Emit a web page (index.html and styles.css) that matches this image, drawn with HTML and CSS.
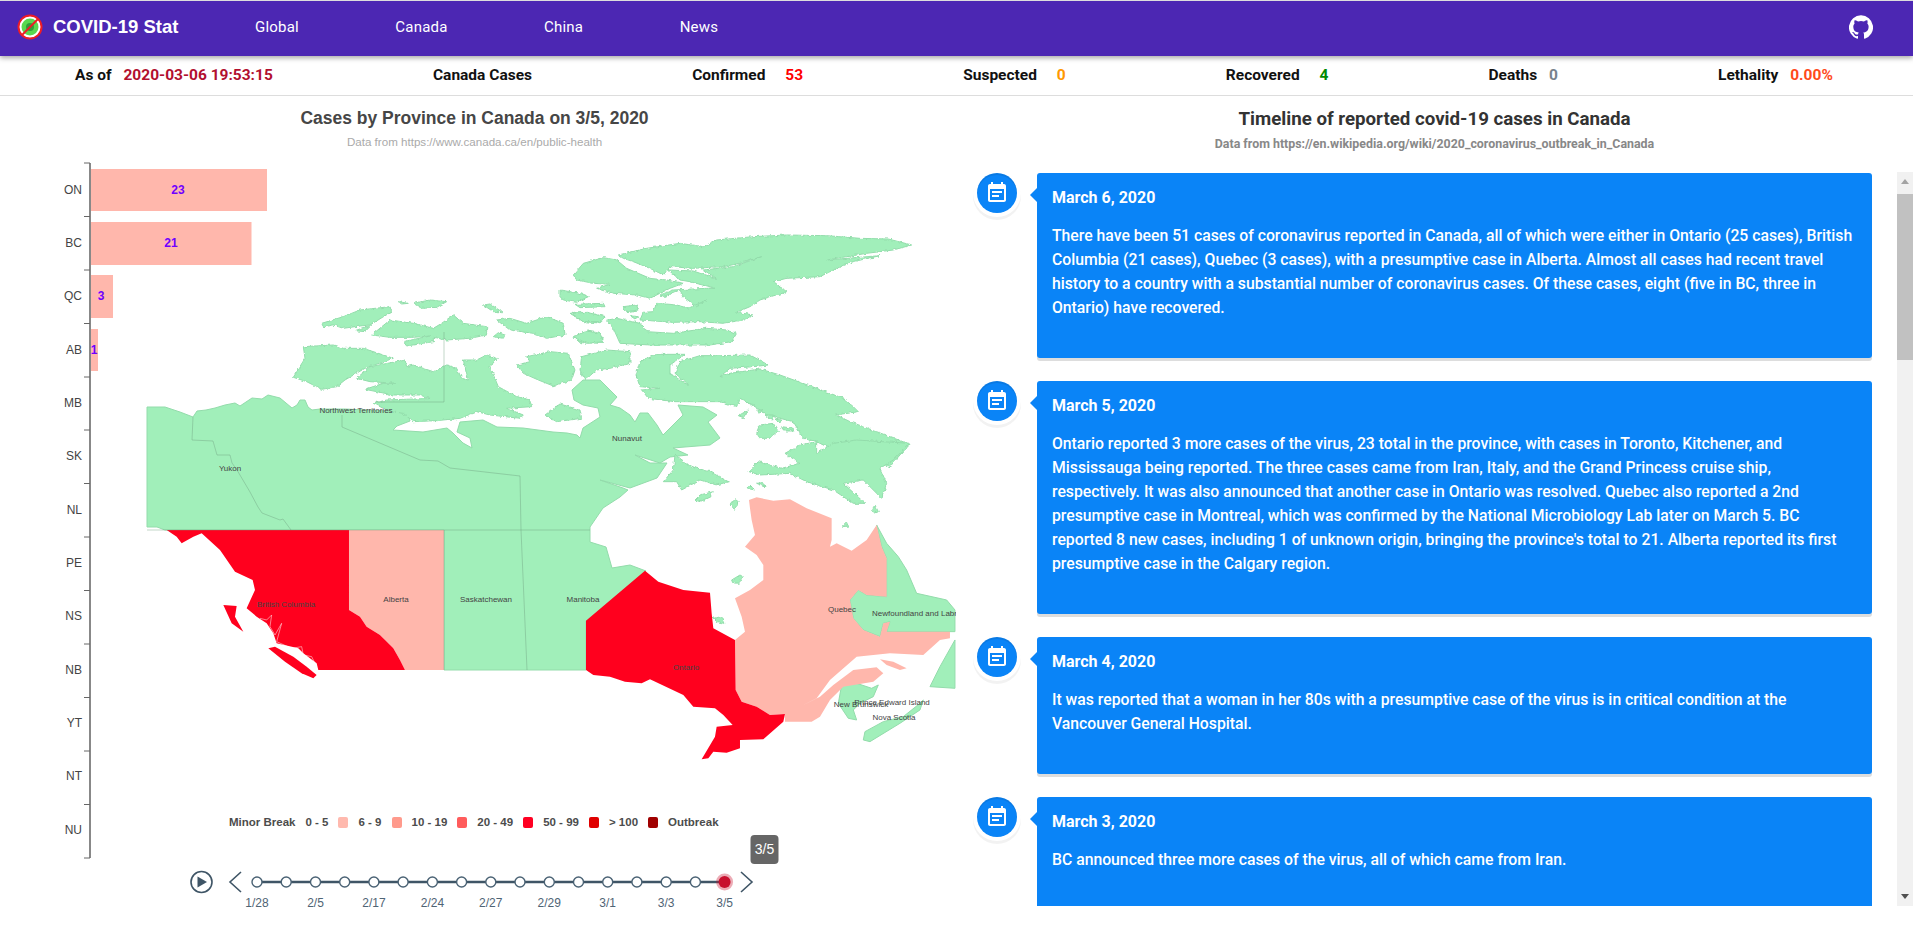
FILE: index.html
```html
<!DOCTYPE html>
<html lang="en">
<head>
    <meta charset="UTF-8">
    <meta name="viewport" content="width=device-width, initial-scale=1.0">
    <title>COVID-19 Stat</title>
    <link rel="stylesheet" href="styles.css">
</head>
<body>

<!-- Top navigation -->
<header class="navbar">
    <a class="brand" href="#">
        <svg class="brand-logo" viewBox="0 0 26 26">
            <circle class="logo-bg" cx="13" cy="13" r="11"/>
            <circle class="logo-virus" cx="13" cy="13" r="8.500"/>
            <circle class="logo-core" cx="13" cy="13" r="4"/>
            <circle class="logo-ring" cx="13" cy="13" r="11.500"/>
            <path class="logo-ring" d="M21 5 L5 21"/>
        </svg>
        COVID-19 Stat
    </a>
    <nav class="nav-links">
        <a href="#">Global</a>
        <a href="#">Canada</a>
        <a href="#">China</a>
        <a href="#">News</a>
    </nav>
    <svg class="github" viewBox="0 0 24 24"><path d="M12 .3a12 12 0 0 0-3.8 23.4c.6.1.8-.3.8-.6v-2c-3.3.7-4-1.6-4-1.6-.6-1.4-1.4-1.8-1.4-1.8-1-.7.1-.7.1-.7 1.2 0 1.9 1.2 1.9 1.2 1 1.8 2.8 1.3 3.5 1 0-.8.4-1.3.7-1.6-2.7-.3-5.5-1.3-5.5-6 0-1.2.5-2.3 1.3-3.1-.2-.4-.6-1.6 0-3.2 0 0 1-.3 3.4 1.2a11.5 11.5 0 0 1 6 0c2.3-1.5 3.3-1.2 3.3-1.2.6 1.6.2 2.8 0 3.2.9.8 1.3 1.9 1.3 3.2 0 4.6-2.8 5.6-5.5 5.9.5.4.9 1 .9 2.2v3.3c0 .3.1.7.8.6A12 12 0 0 0 12 .3"/></svg>
</header>

<!-- Summary numbers -->
<section class="stats">
    <div class="stat stat-first gap-s">As of <span class="v-date">2020-03-06 19:53:15</span></div>
    <div class="stat">Canada Cases</div>
    <div class="stat gap-l">Confirmed <span class="v-confirmed">53</span></div>
    <div class="stat gap-l">Suspected <span class="v-suspected">0</span></div>
    <div class="stat gap-l">Recovered <span class="v-recovered">4</span></div>
    <div class="stat gap-s">Deaths <span class="v-deaths">0</span></div>
    <div class="stat gap-s">Lethality <span class="v-lethality">0.00%</span></div>
</section>

<main class="content">

    <!-- Map and bar chart -->
    <section class="chart-panel">
        <div class="chart-head">
            <h2>Cases by Province in Canada on 3/5, 2020</h2>
            <p>Data from https://www.canada.ca/en/public-health</p>
        </div>

        <svg class="chart" viewBox="0 155 956 705">
            <defs>
                <!-- roughens the island coastlines -->
                <filter id="coast" x="-5%" y="-5%" width="110%" height="110%">
                    <feTurbulence type="fractalNoise" baseFrequency="0.09" numOctaves="2" seed="4" result="noise"/>
                    <feDisplacementMap in="SourceGraphic" in2="noise" scale="11" xChannelSelector="R" yChannelSelector="G"/>
                </filter>
            </defs>

            <!-- mainland, page coordinates -->
            <polygon class="green" points="147,407 165,407 168,408 180,412 193,417 197,411 206,410 215,408 225,405 235,403 240,406 252,398 262,399 268,395 280,398 292,408 297,405 300,400 305,400 308,407 312,410 320,409 345,409 390,411 408,413 410,421 397,426 393,430 423,432 447,428 453,433 460,440 463,443 472,448 470,438 457,432 460,422 483,420 497,427 523,428 553,432 567,433 577,435 580,438 583,428 600,417 598,408 583,405 574,400 572,390 583,380 600,380 617,397 610,405 620,408 630,415 635,422 640,413 648,413 657,425 663,435 670,428 683,415 678,405 703,407 717,415 708,422 720,438 710,445 685,447 673,448 688,455 670,457 660,463 635,455 650,463 667,463 657,478 630,488 600,480 623,488 628,490 620,497 603,508 590,527 590,530 590,542 606,547 612,568 630,565 646,571 586,621 586,670 444,670 444,530 165,530 157,527 147,527"/>

            <!-- west arctic islands -->
            <g class="rough" transform="translate(290,300) scale(.3333)">
                <polygon class="green" points="40,140 130,135 160,145 220,145 310,175 225,205 165,240 140,260 95,268 50,245 10,232 45,175"/>
                <polygon class="green" points="200,235 240,200 345,180 350,200 370,195 430,215 470,195 500,205 515,235 535,240 520,180 560,180 590,165 622,175 600,200 625,260 680,290 720,300 725,320 650,325 700,345 690,355 600,345 560,335 510,355 440,362 370,365 340,340 300,335 250,310 290,300 400,296 420,296 390,285 310,285 225,268 280,250 320,250 240,245"/>
                <polygon class="green" points="95,70 160,50 210,30 300,20 305,35 240,75 195,80 160,85 130,75 100,80"/>
                <polygon class="green" points="195,92 245,75 225,95"/>
                <polygon class="green" points="245,105 300,60 370,70 430,85 455,70 490,45 520,70 590,80 590,105 540,115 470,120 430,112 430,125 350,138 340,125 420,108 370,112 300,112"/>
                <polygon class="green" points="610,110 625,98 645,105 640,115"/>
                <polygon class="green" points="325,5 355,10 335,12"/>
                <polygon class="green" points="370,10 420,0 470,5 440,22 395,25"/>
                <polygon class="green" points="620,60 660,55 710,70 770,50 820,70 825,105 770,115 730,100 660,90"/>
                <polygon class="green" points="580,15 600,12 635,35 610,35"/>
                <polygon class="green" points="850,110 900,92 940,115 935,130 870,128"/>
                <polygon class="green" points="845,40 900,40 945,50 920,68 880,65"/>
                <polygon class="green" points="680,195 720,185 710,170 780,155 835,160 855,210 845,240 790,258 745,240 700,220"/>
                <polygon class="green" points="875,170 950,150 1020,155 1020,190 960,205 920,210 885,240 870,210"/>
                <polygon class="green" points="765,345 810,312 870,330 875,355 800,365"/>
            </g>

            <!-- north and baffin -->
            <g class="rough" transform="translate(560,225) scale(.3333)">
                <polygon class="green" points="40,150 70,115 130,98 170,105 200,130 270,160 320,165 370,175 330,190 270,220 230,210 160,205 110,190 150,178 100,175 50,165"/>
                <polygon class="green" points="175,90 260,70 360,55 430,65 470,45 580,35 680,30 800,32 900,40 985,42 1055,60 1000,75 920,85 800,105 960,92 880,110 830,130 780,155 680,160 640,170 680,200 600,225 570,245 530,262 580,270 550,285 490,295 420,290 340,292 240,285 250,262 280,260 290,235 350,240 385,250 440,225 410,245 370,215 360,195 310,215 300,210 340,195 440,190 465,190 390,170 360,165 325,135 400,138 450,155 470,160 430,135 520,125 605,95 540,115 490,125 400,130 330,125 310,150 270,130 220,110 190,100"/>
                <polygon class="green" points="160,310 140,285 170,280 240,295 260,320 340,325 440,310 500,315 530,325 515,350 450,360 350,360 270,360 180,355"/>
                <polygon class="green" points="0,195 60,205 85,215 50,232 10,225 0,215"/>
                <polygon class="green" points="45,238 130,235 135,245 60,248"/>
                <polygon class="green" points="30,265 80,262 135,275 125,290 70,290"/>
                <polygon class="green" points="40,335 80,318 120,325 130,350 80,355"/>
                <polygon class="green" points="190,245 230,240 235,255 200,260"/>
                <polygon class="green" points="210,272 235,275 225,282"/>
                <polygon class="green" points="228,450 240,410 290,388 375,388 330,420 330,445 375,475 385,478 345,445 360,410 420,392 480,392 570,390 625,420 580,425 510,430 480,455 510,445 600,432 660,450 770,490 850,520 880,545 895,560 830,570 870,590 950,620 1050,658 1020,690 990,725 950,710 900,680 860,675 830,680 770,650 730,640 700,590 660,580 620,570 590,548 540,520 530,545 480,530 420,530 345,530 265,520 245,495 300,490 240,485"/>
                <polygon class="green" points="590,625 600,600 640,595 655,620 630,640 600,640"/>
                <polygon class="green" points="665,605 700,610 700,618 670,618"/>
                <polygon class="green" points="615,570 640,570 635,585"/>
                <polygon class="green" points="535,572 565,555 550,578"/>
                <polygon class="green" points="590,555 605,555 600,565"/>
                <polygon class="green" points="645,582 665,585 660,597"/>
            </g>

            <!-- hudson bay islands and south baffin -->
            <g class="rough" transform="translate(600,440) scale(.3333)">
                <polygon class="green" points="447,95 475,65 545,85 600,70 555,40 600,15 650,5 650,40 700,10 770,0 930,10 880,60 840,85 860,130 845,175 790,120 730,130 795,190 760,190 700,150 620,125 570,100 480,105"/>
                <polygon class="green" points="190,125 220,90 225,45 255,70 290,85 330,95 385,125 350,135 300,120 245,150 230,125"/>
                <polygon class="green" points="285,180 300,165 340,155 330,170 300,185"/>
                <polygon class="green" points="390,195 405,178 415,185 405,208"/>
                <polygon class="green" points="440,145 450,135 465,150"/>
                <polygon class="green" points="470,130 490,128 495,140"/>
                <polygon class="green" points="815,210 825,195 835,215 825,220"/>
                <polygon class="green" points="728,260 740,248 745,258"/>
                <polygon class="green" points="340,535 365,530 375,550 350,545"/>
                <polygon class="green" points="395,420 420,405 432,412 415,430 398,428"/>
            </g>

            <!-- east provinces -->
            <g transform="translate(600,440) scale(.3333)">
                <polygon class="green" points="830,255 845,320 860,355 860,470 800,465 775,450 750,480 760,535 790,570 840,590 850,550 870,545 860,575 1065,575 1065,510 1040,480 950,460 920,390 895,350 860,310"/>
                <polygon class="green" points="990,740 1020,680 1065,600 1065,745"/>
                <polygon class="green" points="725,735 770,730 815,745 835,735 820,770 780,790 760,810 770,840 745,835 715,790"/>
                <polygon class="green" points="790,900 795,875 850,845 910,830 960,790 970,780 960,810 900,850 810,905"/>
                <polygon class="pink" points="447,180 470,172 520,182 570,178 620,205 695,235 695,300 690,320 710,310 755,332 800,300 830,255 845,320 860,355 860,470 800,465 775,450 750,480 760,535 790,570 840,590 850,550 870,545 860,575 1050,575 1050,595 1020,600 970,645 870,640 770,650 690,720 650,775 600,800 660,770 700,735 760,690 830,682 850,700 820,725 730,740 690,780 660,830 635,845 555,845 555,822 510,825 470,800 425,785 407,750 405,600 435,575 425,530 405,475 450,450 490,420 490,375 470,345 435,320 465,285 455,240 450,205"/>
                <polygon class="pink" points="840,658 880,665 920,685 900,690 860,675"/>
                <polygon class="red" points="-42,542 135,392 175,425 250,450 330,458 335,520 340,565 405,600 407,750 425,785 470,800 510,825 555,822 550,845 490,898 420,900 420,925 380,938 340,935 325,955 305,958 345,890 350,860 398,855 370,825 345,805 280,800 250,765 150,718 125,730 75,725 30,710 -20,705 -42,690"/>
            </g>

            <!-- west provinces -->
            <g transform="translate(160,520) scale(.3333)">
                <polygon class="pink" points="567,30 852,30 852,450 735,450 720,420 700,385 660,345 620,320 600,290 567,270"/>
                <polygon class="red" points="20,30 567,30 567,270 600,290 620,320 660,345 700,385 720,420 735,450 475,450 470,430 430,400 415,385 350,370 340,340 320,310 290,290 260,265 285,210 278,180 225,155 180,90 125,40 100,50 65,70 50,50"/>
                <polygon class="red" points="325,385 345,380 400,410 440,440 470,465 460,475 425,460 375,425"/>
                <polygon class="red" points="190,255 230,258 225,290 250,335 215,310"/>
                <path class="fjord" d="M300 295 320 300 335 285 330 320 345 345 365 310 350 365 395 385 425 380 430 405 455 410 470 440"/>
            </g>

            <!-- province borders -->
            <path class="border" d="M193 417 192 440 213 441 217 455 230 455 232 463 237 470 250 492 258 507 262 513 280 520 283 519 291 530"/>
            <path class="border" d="M342 415 342 427 420 460 438 461 450 468 520 476 521 530 527 670"/>
            <path class="border" d="M147 530 590 530 M444 530 444 670"/>
            <path class="border" d="M444 332 444 402 375 402"/>

            <!-- province names -->
            <text class="region" x="356" y="413">Northwest Territories</text>
            <text class="region" x="230" y="471">Yukon</text>
            <text class="region" x="627" y="441">Nunavut</text>
            <text class="region" x="286" y="607">British Columbia</text>
            <text class="region" x="396" y="602">Alberta</text>
            <text class="region" x="486" y="602">Saskatchewan</text>
            <text class="region" x="583" y="602">Manitoba</text>
            <text class="region" x="686" y="670">Ontario</text>
            <text class="region" x="842" y="612">Quebec</text>
            <text class="region" x="861" y="707">New Brunswick</text>
            <text class="region" x="892" y="705">Prince Edward Island</text>
            <text class="region" x="894" y="720">Nova Scotia</text>
            <text class="region region-start" x="872" y="616">Newfoundland and Labrador</text>

            <!-- bars -->
            <rect class="bar" x="90" y="169" width="177" height="42"/>
            <rect class="bar" x="90" y="222" width="161.5" height="43"/>
            <rect class="bar" x="90" y="275" width="23" height="43"/>
            <rect class="bar" x="90" y="329" width="8" height="42"/>
            <text class="bar-value" x="178" y="194">23</text>
            <text class="bar-value" x="171" y="247">21</text>
            <text class="bar-value" x="101" y="300">3</text>
            <text class="bar-value" x="94" y="354">1</text>

            <!-- y axis -->
            <path class="axis" d="M90 163 90 858"/>
            <path class="tick" d="M84 163H90 M84 216.5H90 M84 270H90 M84 323.500H90 M84 377H90 M84 430H90 M84 483.500H90 M84 537H90 M84 590.500H90 M84 644H90 M84 697.500H90 M84 751H90 M84 804.500H90 M84 858H90"/>
            <text class="y-label" x="82" y="194">ON</text>
            <text class="y-label" x="82" y="247">BC</text>
            <text class="y-label" x="82" y="300">QC</text>
            <text class="y-label" x="82" y="354">AB</text>
            <text class="y-label" x="82" y="407">MB</text>
            <text class="y-label" x="82" y="460">SK</text>
            <text class="y-label" x="82" y="514">NL</text>
            <text class="y-label" x="82" y="567">PE</text>
            <text class="y-label" x="82" y="620">NS</text>
            <text class="y-label" x="82" y="674">NB</text>
            <text class="y-label" x="82" y="727">YT</text>
            <text class="y-label" x="82" y="780">NT</text>
            <text class="y-label" x="82" y="834">NU</text>
        </svg>

        <div class="legend">
            <span class="legend-title">Minor Break</span>
            <span>0 - 5</span><i class="swatch s1"></i>
            <span>6 - 9</span><i class="swatch s2"></i>
            <span>10 - 19</span><i class="swatch s3"></i>
            <span>20 - 49</span><i class="swatch s4"></i>
            <span>50 - 99</span><i class="swatch s5"></i>
            <span>&gt; 100</span><i class="swatch s6"></i>
            <span>Outbreak</span>
        </div>

        <!-- date player -->
        <svg class="player" viewBox="0 831 956 94">
            <circle class="ctl" cx="201.500" cy="882" r="10.500"/>
            <path class="ctl-fill" d="M197.500 876.500 207 882 197.500 887.500z"/>
            <path class="ctl" d="M241 872 230 882 241 892"/>
            <path class="ctl" d="M741 872 752 882 741 892"/>
            <path class="track" d="M257 882H725"/>
            <g class="nodes">
                <circle cx="257" cy="882" r="5"/><circle cx="286.200" cy="882" r="5"/><circle cx="315.500" cy="882" r="5"/><circle cx="344.700" cy="882" r="5"/><circle cx="373.900" cy="882" r="5"/><circle cx="403.100" cy="882" r="5"/><circle cx="432.400" cy="882" r="5"/><circle cx="461.600" cy="882" r="5"/><circle cx="490.800" cy="882" r="5"/><circle cx="520" cy="882" r="5"/><circle cx="549.300" cy="882" r="5"/><circle cx="578.500" cy="882" r="5"/><circle cx="607.700" cy="882" r="5"/><circle cx="636.900" cy="882" r="5"/><circle cx="666.200" cy="882" r="5"/><circle cx="695.400" cy="882" r="5"/>
            </g>
            <circle class="now-glow" cx="724.600" cy="882" r="8.500"/>
            <circle class="now" cx="724.600" cy="882" r="6"/>
            <text class="date" x="257" y="907">1/28</text>
            <text class="date" x="315.500" y="907">2/5</text>
            <text class="date" x="373.900" y="907">2/17</text>
            <text class="date" x="432.400" y="907">2/24</text>
            <text class="date" x="490.800" y="907">2/27</text>
            <text class="date" x="549.300" y="907">2/29</text>
            <text class="date" x="607.700" y="907">3/1</text>
            <text class="date" x="666.200" y="907">3/3</text>
            <text class="date" x="724.600" y="907">3/5</text>
            <rect class="tip" x="750.500" y="835" width="28" height="29" rx="4"/>
            <text class="tip-text" x="764.500" y="854">3/5</text>
        </svg>
    </section>

    <!-- Timeline -->
    <section class="timeline-panel">
        <div class="timeline-head">
            <h2>Timeline of reported covid-19 cases in Canada</h2>
            <p>Data from https://en.wikipedia.org/wiki/2020_coronavirus_outbreak_in_Canada</p>
        </div>

        <div class="timeline-wrap">
            <div class="timeline">
                <article class="event">
                    <div class="event-icon"><svg viewBox="0 0 24 24"><path d="M17 10H7v2h10v-2zm2-7h-1V1h-2v2H8V1H6v2H5c-1.110 0-1.990.9-1.990 2L3 19c0 1.100.89 2 2 2h14c1.100 0 2-.9 2-2V5c0-1.100-.9-2-2-2zm0 16H5V8h14v11zm-5-5H7v2h7v-2z"/></svg></div>
                    <div class="event-card">
                        <h3>March 6, 2020</h3>
                        <p>There have been 51 cases of coronavirus reported in Canada, all of which were either in Ontario (25 cases), British Columbia (21 cases), Quebec (3 cases), with a presumptive case in Alberta. Almost all cases had recent travel history to a country with a substantial number of coronavirus cases. Of these cases, eight (five in BC, three in Ontario) have recovered.</p>
                    </div>
                </article>
                <article class="event">
                    <div class="event-icon"><svg viewBox="0 0 24 24"><path d="M17 10H7v2h10v-2zm2-7h-1V1h-2v2H8V1H6v2H5c-1.110 0-1.990.9-1.990 2L3 19c0 1.100.89 2 2 2h14c1.100 0 2-.9 2-2V5c0-1.100-.9-2-2-2zm0 16H5V8h14v11zm-5-5H7v2h7v-2z"/></svg></div>
                    <div class="event-card">
                        <h3>March 5, 2020</h3>
                        <p>Ontario reported 3 more cases of the virus, 23 total in the province, with cases in Toronto, Kitchener, and Mississauga being reported. The three cases came from Iran, Italy, and the Grand Princess cruise ship, respectively. It was also announced that another case in Ontario was resolved. Quebec also reported a 2nd presumptive case in Montreal, which was confirmed by the National Microbiology Lab later on March 5. BC reported 8 new cases, including 1 of unknown origin, bringing the province's total to 21. Alberta reported its first presumptive case in the Calgary region.</p>
                    </div>
                </article>
                <article class="event">
                    <div class="event-icon"><svg viewBox="0 0 24 24"><path d="M17 10H7v2h10v-2zm2-7h-1V1h-2v2H8V1H6v2H5c-1.110 0-1.990.9-1.990 2L3 19c0 1.100.89 2 2 2h14c1.100 0 2-.9 2-2V5c0-1.100-.9-2-2-2zm0 16H5V8h14v11zm-5-5H7v2h7v-2z"/></svg></div>
                    <div class="event-card">
                        <h3>March 4, 2020</h3>
                        <p>It was reported that a woman in her 80s with a presumptive case of the virus is in critical condition at the Vancouver General Hospital.</p>
                    </div>
                </article>
                <article class="event">
                    <div class="event-icon"><svg viewBox="0 0 24 24"><path d="M17 10H7v2h10v-2zm2-7h-1V1h-2v2H8V1H6v2H5c-1.110 0-1.990.9-1.990 2L3 19c0 1.100.89 2 2 2h14c1.100 0 2-.9 2-2V5c0-1.100-.9-2-2-2zm0 16H5V8h14v11zm-5-5H7v2h7v-2z"/></svg></div>
                    <div class="event-card">
                        <h3>March 3, 2020</h3>
                        <p>BC announced three more cases of the virus, all of which came from Iran.</p>
                    </div>
                </article>
            </div>

            <div class="scrollbar">
                <span class="arrow-up"></span>
                <div class="scroll-track"><div class="scroll-thumb"></div></div>
                <span class="arrow-down"></span>
            </div>
        </div>
    </section>
</main>

</body>
</html>
```

FILE: styles.css
```css
* {
    box-sizing: border-box;
}

html, body {
    margin: 0;
    padding: 0;
    height: 949px;
    overflow: hidden;
    background-color: #fff;
    font-family: Roboto, "Liberation Sans", sans-serif;
}

h2, h3, p {
    margin: 0;
}

/* navbar */
.navbar {
    display: flex;
    align-items: center;
    height: 56px;
    padding: 0 0 3px 17px;
    background-color: #4c27b3;
    border-top: 1px solid #ddd;
    box-shadow: 0 2px 5px rgba(0, 0, 0, 0.35);
    position: relative;
}

.brand {
    display: flex;
    align-items: center;
    gap: 10px;
    width: 238px;
    color: #fff;
    font-family: "Liberation Sans", sans-serif;
    font-size: 18.500px;
    font-weight: 700;
    text-decoration: none;
}

.brand-logo {
    width: 26px;
    height: 26px;
}

.logo-bg {
    fill: #fff;
}

.logo-virus {
    fill: #58d84e;
}

.logo-core {
    fill: #2f9d3a;
}

.logo-ring {
    fill: none;
    stroke: #ee1c25;
    stroke-width: 2;
}

.nav-links {
    display: flex;
    gap: 96.500px;
}

.nav-links a {
    color: #fff;
    font-size: 15px;
    letter-spacing: 0.2px;
    text-decoration: none;
}

.github {
    width: 24px;
    height: 24px;
    margin-left: auto;
    margin-right: 40px;
    fill: #fff;
}

/* stats row */
.stats {
    display: flex;
    justify-content: space-around;
    align-items: center;
    height: 40px;
    padding-bottom: 2px;
    border-bottom: 1px solid #ddd;
    font-size: 15.500px;
    font-weight: 700;
    color: #111;
}

.stat {
    display: flex;
    align-items: center;
    white-space: pre;
}

.stat-first {
    margin-left: -5px;
}

.gap-s span {
    margin-left: 8px;
}

.gap-l span {
    margin-left: 16px;
}

.v-date { color: #b2102f; }
.v-confirmed { color: #f00; }
.v-suspected { color: #ff9800; }
.v-recovered { color: #008a00; }
.v-deaths { color: #78838c; }
.v-lethality { color: #ff4a1c; }

/* main */
.content {
    display: grid;
    grid-template-columns: 956px 1fr;
    height: 853px;
}

/* left side */
.chart-panel {
    display: flex;
    flex-direction: column;
    min-width: 0;
}

.chart-head {
    height: 59px;
    padding: 12px 7px 0 0;
    text-align: center;
    font-family: "Liberation Sans", sans-serif;
}

.chart-head h2 {
    font-size: 17.500px;
    line-height: 21px;
    color: #464646;
}

.chart-head p {
    margin-top: 6px;
    font-size: 11.600px;
    line-height: 14px;
    color: #aaa;
}

.chart {
    display: block;
    width: 956px;
    height: 705px;
    font-family: "Liberation Sans", sans-serif;
}

.rough {
    filter: url(#coast);
}

.green { fill: #a1efba; stroke: #93dcab; stroke-width: 1; vector-effect: non-scaling-stroke; }
.pink { fill: #ffb7ac; }
.red { fill: #ff001e; }

.fjord {
    fill: none;
    stroke: #fff;
    stroke-width: 1.500;
}

.border {
    fill: none;
    stroke: #6f9f80;
    stroke-width: 0.6;
    stroke-opacity: 0.7;
}

.region {
    font-size: 8px;
    fill: #444;
    text-anchor: middle;
}

.region-start {
    text-anchor: start;
}

.bar { fill: #ffb7ac; }

.bar-value {
    font-size: 12px;
    font-weight: 700;
    fill: #7000ff;
    text-anchor: middle;
}

.axis {
    fill: none;
    stroke: #888;
    stroke-width: 2;
}

.tick {
    fill: none;
    stroke: #666;
    stroke-width: 1;
}

.y-label {
    font-size: 12px;
    fill: #444;
    text-anchor: end;
}

/* sits in the empty lower right of the chart, next to the last axis rows */
.legend {
    display: flex;
    align-items: center;
    gap: 10px;
    height: 16px;
    margin-top: -46px;
    padding-left: 229px;
    font-family: "Liberation Sans", sans-serif;
    font-size: 11.500px;
    font-weight: 700;
    color: #4c4c4c;
}

.swatch {
    width: 10px;
    height: 11px;
    border-radius: 2px;
}

.s1 { background-color: #ffb9ae; }
.s2 { background-color: #ff9a8c; }
.s3 { background-color: #ff5c5c; }
.s4 { background-color: #ff0022; }
.s5 { background-color: #e00000; }
.s6 { background-color: #a00000; }

.player {
    display: block;
    width: 956px;
    height: 94px;
    margin-top: 1px;
    font-family: "Liberation Sans", sans-serif;
}

.ctl {
    fill: none;
    stroke: #3f5566;
    stroke-width: 1.600;
}

.ctl-fill { fill: #3f5566; }

.track {
    stroke: #3f5566;
    stroke-width: 2.400;
}

.nodes circle {
    fill: #fff;
    stroke: #4a6274;
    stroke-width: 1.400;
}

.now { fill: #c8102e; }
.now-glow { fill: rgba(200, 16, 46, 0.35); }

.date {
    font-size: 12px;
    fill: #4f6475;
    text-anchor: middle;
}

.tip { fill: #666; }

.tip-text {
    font-size: 14px;
    fill: #fff;
    text-anchor: middle;
}

/* right side */
.timeline-panel {
    display: flex;
    flex-direction: column;
    min-width: 0;
}

.timeline-head {
    height: 76px;
    padding-top: 11px;
    text-align: center;
}

.timeline-head h2 {
    font-size: 18.700px;
    font-weight: 700;
    line-height: 24px;
    color: #333;
}

.timeline-head p {
    margin-top: 6px;
    font-size: 12.400px;
    font-weight: 700;
    line-height: 14px;
    color: #888;
}

.timeline-wrap {
    display: flex;
    height: 734px;
}

.timeline {
    flex: 1;
    min-width: 0;
    overflow: hidden;
    padding: 1px 25px 0 21px;
}

.event {
    display: flex;
    align-items: flex-start;
    gap: 20px;
    margin-bottom: 23px;
}

.event-icon {
    flex: none;
    display: flex;
    align-items: center;
    justify-content: center;
    width: 40px;
    height: 40px;
    border-radius: 50%;
    background-color: #0a84f7;
    box-shadow: 0 0 0 4px #fff, inset 0 2px 0 rgba(0, 0, 0, 0.08), 0 3px 0 4px rgba(0, 0, 0, 0.05);
}

.event-icon svg {
    width: 24px;
    height: 24px;
    fill: #fff;
}

.event-card {
    flex: 1;
    position: relative;
    padding: 13px 15px 38px;
    background-color: #0a84f7;
    border-radius: 3px;
    box-shadow: 0 3px 0 #ddd;
    color: #fff;
}

.event-card::before {
    content: "";
    position: absolute;
    left: -7px;
    top: 15px;
    border: 7px solid transparent;
    border-left-width: 0;
    border-right-color: #0a84f7;
}

.event-card h3 {
    font-size: 16px;
    font-weight: 700;
    line-height: 24px;
}

.event-card p {
    margin-top: 14px;
    font-size: 15.750px;
    font-weight: 500;
    line-height: 24px;
}

.scrollbar {
    flex: none;
    display: flex;
    flex-direction: column;
    width: 16px;
    background-color: #f1f1f1;
}

.scroll-track {
    flex: 1;
    padding-top: 3px;
}

.scroll-thumb {
    height: 166px;
    background-color: #c1c1c1;
}

.arrow-up,
.arrow-down {
    flex: none;
    align-self: center;
    width: 0;
    height: 0;
    margin: 7px 0;
    border: 4.500px solid transparent;
    border-top-width: 0;
    border-bottom: 5px solid #a3a3a3;
}

.arrow-down {
    border-top: 5px solid #505050;
    border-bottom-width: 0;
}
```
